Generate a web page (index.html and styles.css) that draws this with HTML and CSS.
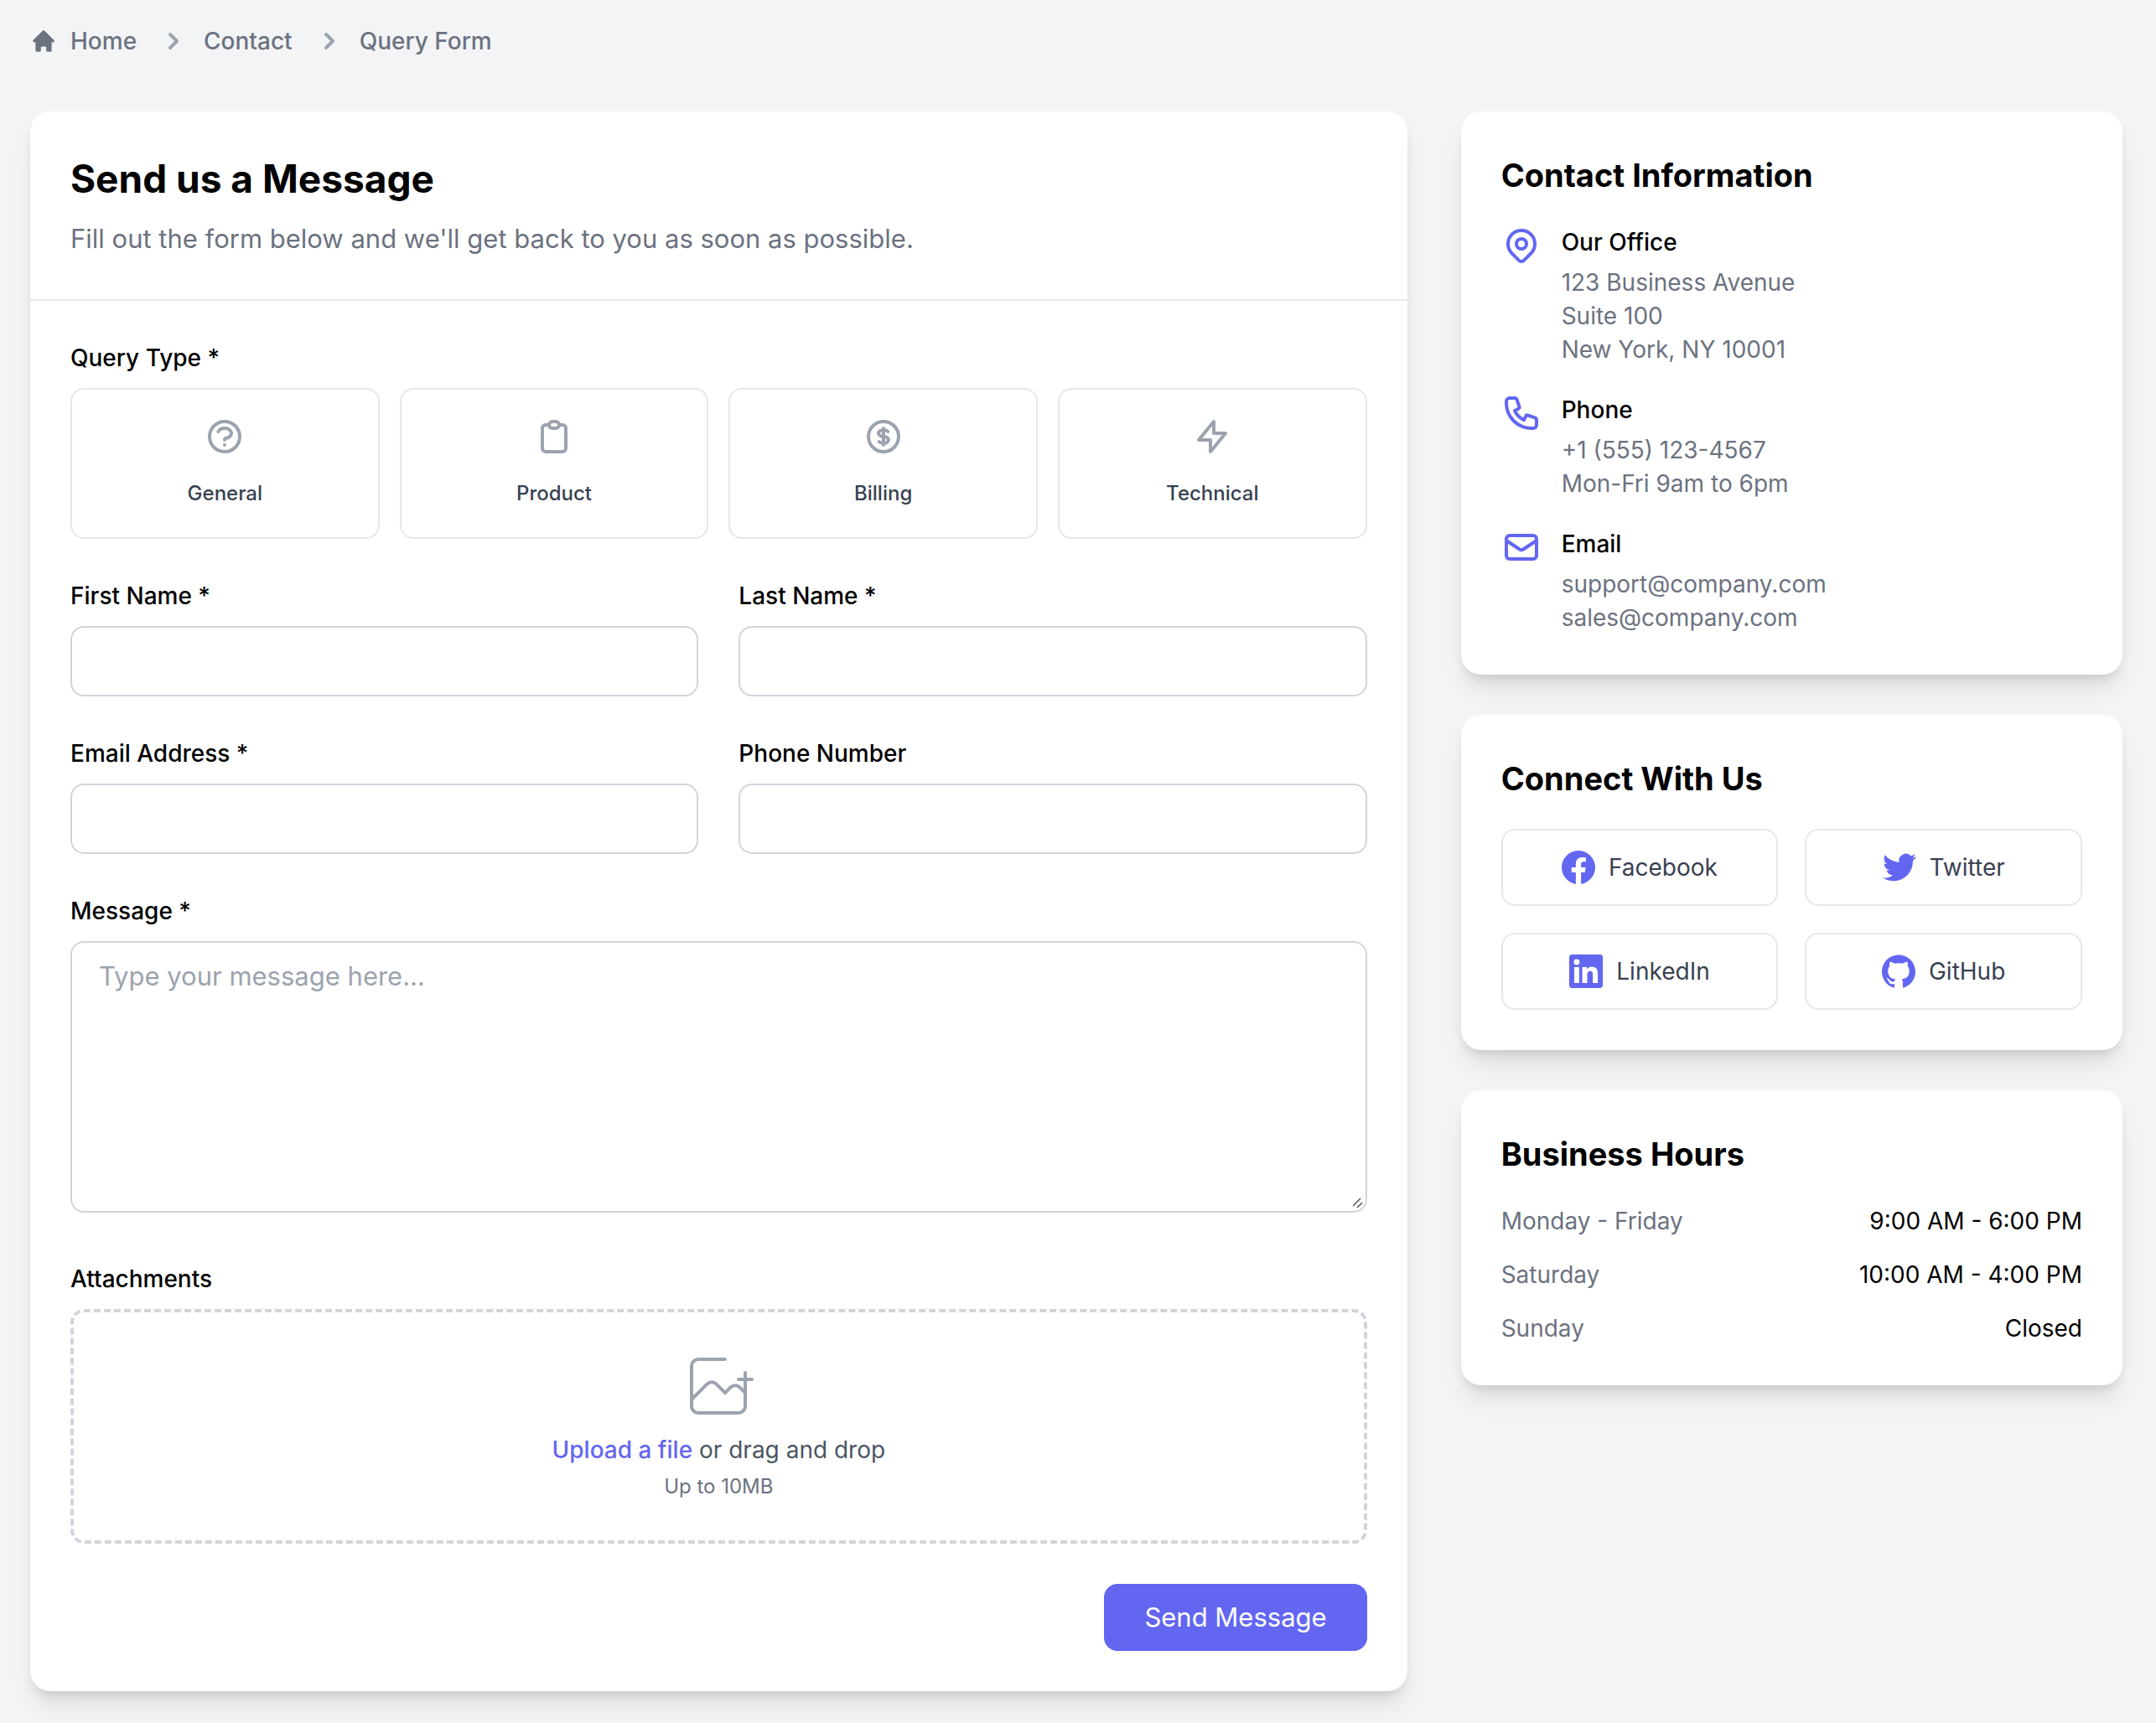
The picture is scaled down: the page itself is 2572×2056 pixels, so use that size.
FILE: index.html
```html
<!DOCTYPE html>
<html lang="en">
<head>
    <meta charset="UTF-8">
    <meta name="viewport" content="width=device-width, initial-scale=1.0">
    <title>Query Form</title>
    <link rel="stylesheet" href="styles.css">
</head>
<body>

<nav class="breadcrumb" aria-label="Breadcrumb">
    <a href="#" class="crumb">
        <svg class="home-icon" viewBox="0 0 20 20" fill="currentColor"><path d="M10.707 2.293a1 1 0 00-1.414 0l-7 7a1 1 0 001.414 1.414L4 10.414V17a1 1 0 001 1h2a1 1 0 001-1v-2a1 1 0 011-1h2a1 1 0 011 1v2a1 1 0 001 1h2a1 1 0 001-1v-6.586l.293.293a1 1 0 001.414-1.414l-7-7z"/></svg>
        Home
    </a>
    <a href="#" class="crumb">
        <svg class="chevron" viewBox="0 0 20 20" fill="currentColor"><path fill-rule="evenodd" d="M7.293 14.707a1 1 0 010-1.414L10.586 10 7.293 6.707a1 1 0 011.414-1.414l4 4a1 1 0 010 1.414l-4 4a1 1 0 01-1.414 0z" clip-rule="evenodd"/></svg>
        Contact
    </a>
    <span class="crumb">
        <svg class="chevron" viewBox="0 0 20 20" fill="currentColor"><path fill-rule="evenodd" d="M7.293 14.707a1 1 0 010-1.414L10.586 10 7.293 6.707a1 1 0 011.414-1.414l4 4a1 1 0 010 1.414l-4 4a1 1 0 01-1.414 0z" clip-rule="evenodd"/></svg>
        Query Form
    </span>
</nav>

<div class="layout">

    <!-- Message form -->
    <main class="card form-card">
        <div class="form-header">
            <h1>Send us a Message</h1>
            <p>Fill out the form below and we'll get back to you as soon as possible.</p>
        </div>

        <form class="query-form">
            <fieldset class="query-types">
                <legend class="label">Query Type *</legend>
                <div class="type-grid">
                    <label class="type-option">
                        <input type="radio" name="queryType" value="general">
                        <svg class="line-icon" viewBox="0 0 24 24"><path d="M8.228 9c.549-1.165 2.03-2 3.772-2 2.21 0 4 1.343 4 3 0 1.4-1.278 2.575-3.006 2.907-.542.104-.994.54-.994 1.093m0 3h.01M21 12a9 9 0 11-18 0 9 9 0 0118 0z"/></svg>
                        <span>General</span>
                    </label>
                    <label class="type-option">
                        <input type="radio" name="queryType" value="product">
                        <svg class="line-icon" viewBox="0 0 24 24"><path d="M9 5H7a2 2 0 00-2 2v12a2 2 0 002 2h10a2 2 0 002-2V7a2 2 0 00-2-2h-2M9 5a2 2 0 002 2h2a2 2 0 002-2M9 5a2 2 0 012-2h2a2 2 0 012 2"/></svg>
                        <span>Product</span>
                    </label>
                    <label class="type-option">
                        <input type="radio" name="queryType" value="billing">
                        <svg class="line-icon" viewBox="0 0 24 24"><path d="M12 8c-1.657 0-3 .895-3 2s1.343 2 3 2 3 .895 3 2-1.343 2-3 2m0-8c1.11 0 2.08.402 2.599 1M12 8V7m0 1v8m0 0v1m0-1c-1.11 0-2.08-.402-2.599-1M21 12a9 9 0 11-18 0 9 9 0 0118 0z"/></svg>
                        <span>Billing</span>
                    </label>
                    <label class="type-option">
                        <input type="radio" name="queryType" value="technical">
                        <svg class="line-icon" viewBox="0 0 24 24"><path d="M13 10V3L4 14h7v7l9-11h-7z"/></svg>
                        <span>Technical</span>
                    </label>
                </div>
            </fieldset>

            <div class="field-row">
                <div class="field">
                    <label class="label" for="firstName">First Name *</label>
                    <input type="text" id="firstName" name="firstName" required>
                </div>
                <div class="field">
                    <label class="label" for="lastName">Last Name *</label>
                    <input type="text" id="lastName" name="lastName" required>
                </div>
            </div>

            <div class="field-row">
                <div class="field">
                    <label class="label" for="email">Email Address *</label>
                    <input type="email" id="email" name="email" required>
                </div>
                <div class="field">
                    <label class="label" for="phone">Phone Number</label>
                    <input type="tel" id="phone" name="phone">
                </div>
            </div>

            <div class="field">
                <label class="label" for="message">Message *</label>
                <textarea id="message" name="message" rows="6" placeholder="Type your message here..." required></textarea>
            </div>

            <div class="field">
                <label class="label" for="attachment">Attachments</label>
                <div class="dropzone">
                    <svg class="upload-icon" viewBox="0 0 48 48"><path d="M28 8H12a4 4 0 00-4 4v24a4 4 0 004 4h24a4 4 0 004-4V16M36 20h8M8 32l9.172-9.172a4 4 0 015.656 0L28 28l3.172-3.172a4 4 0 015.656 0L40 28"/></svg>
                    <p class="upload-text"><label class="upload-link" for="attachment">Upload a file</label> or drag and drop</p>
                    <input type="file" id="attachment" name="attachment" hidden>
                    <p class="upload-hint">Up to 10MB</p>
                </div>
            </div>

            <div class="actions">
                <button type="submit" class="submit-button">Send Message</button>
            </div>
        </form>
    </main>

    <aside class="sidebar">

        <section class="card side-card">
            <h2>Contact Information</h2>
            <div class="contact-list">
                <div class="contact-item">
                    <svg class="line-icon" viewBox="0 0 24 24"><path d="M17.657 16.657L13.414 20.9a1.998 1.998 0 01-2.827 0l-4.244-4.243a8 8 0 1111.314 0z"/><path d="M15 11a3 3 0 11-6 0 3 3 0 016 0z"/></svg>
                    <div>
                        <h3>Our Office</h3>
                        <p>123 Business Avenue<br>Suite 100<br>New York, NY 10001</p>
                    </div>
                </div>
                <div class="contact-item">
                    <svg class="line-icon" viewBox="0 0 24 24"><path d="M3 5a2 2 0 012-2h3.28a1 1 0 01.948.684l1.498 4.493a1 1 0 01-.502 1.21l-2.257 1.13a11.042 11.042 0 005.516 5.516l1.13-2.257a1 1 0 011.21-.502l4.493 1.498a1 1 0 01.684.949V19a2 2 0 01-2 2h-1C9.716 21 3 14.284 3 6V5z"/></svg>
                    <div>
                        <h3>Phone</h3>
                        <p>+1 (555) 123-4567<br>Mon-Fri 9am to 6pm</p>
                    </div>
                </div>
                <div class="contact-item">
                    <svg class="line-icon" viewBox="0 0 24 24"><path d="M3 8l7.89 5.26a2 2 0 002.22 0L21 8M5 19h14a2 2 0 002-2V7a2 2 0 00-2-2H5a2 2 0 00-2 2v10a2 2 0 002 2z"/></svg>
                    <div>
                        <h3>Email</h3>
                        <p>support@company.com<br>sales@company.com</p>
                    </div>
                </div>
            </div>
        </section>

        <section class="card side-card">
            <h2>Connect With Us</h2>
            <div class="social-grid">
                <a href="#" class="social-link">
                    <svg viewBox="0 0 24 24"><path d="M24 12.073c0-6.627-5.373-12-12-12s-12 5.373-12 12c0 5.99 4.388 10.954 10.125 11.854v-8.385H7.078v-3.47h3.047V9.43c0-3.007 1.792-4.669 4.533-4.669 1.312 0 2.686.235 2.686.235v2.953H15.83c-1.491 0-1.956.925-1.956 1.874v2.25h3.328l-.532 3.47h-2.796v8.385C19.612 23.027 24 18.062 24 12.073z"/></svg>
                    Facebook
                </a>
                <a href="#" class="social-link">
                    <svg viewBox="0 0 24 24"><path d="M23.953 4.57a10 10 0 01-2.825.775 4.958 4.958 0 002.163-2.723c-.951.555-2.005.959-3.127 1.184a4.92 4.92 0 00-8.384 4.482C7.69 8.095 4.067 6.13 1.64 3.162a4.822 4.822 0 00-.666 2.475c0 1.71.87 3.213 2.188 4.096a4.904 4.904 0 01-2.228-.616v.06a4.923 4.923 0 003.946 4.827 4.996 4.996 0 01-2.212.085 4.936 4.936 0 004.604 3.417 9.867 9.867 0 01-6.102 2.105c-.39 0-.779-.023-1.17-.067a13.995 13.995 0 007.557 2.209c9.053 0 13.998-7.496 13.998-13.985 0-.21 0-.42-.015-.63A9.935 9.935 0 0024 4.59z"/></svg>
                    Twitter
                </a>
                <a href="#" class="social-link">
                    <svg viewBox="0 0 24 24"><path d="M20.447 20.452h-3.554v-5.569c0-1.328-.027-3.037-1.852-3.037-1.853 0-2.136 1.445-2.136 2.939v5.667H9.351V9h3.414v1.561h.046c.477-.9 1.637-1.85 3.37-1.85 3.601 0 4.267 2.37 4.267 5.455v6.286zM5.337 7.433a2.062 2.062 0 01-2.063-2.065 2.064 2.064 0 112.063 2.065zm1.782 13.019H3.555V9h3.564v11.452zM22.225 0H1.771C.792 0 0 .774 0 1.729v20.542C0 23.227.792 24 1.771 24h20.451C23.2 24 24 23.227 24 22.271V1.729C24 .774 23.2 0 22.222 0h.003z"/></svg>
                    LinkedIn
                </a>
                <a href="#" class="social-link">
                    <svg viewBox="0 0 24 24"><path d="M12 .297c-6.63 0-12 5.373-12 12 0 5.303 3.438 9.8 8.205 11.385.6.113.82-.258.82-.577 0-.285-.01-1.04-.015-2.04-3.338.724-4.042-1.61-4.042-1.61C4.422 18.07 3.633 17.7 3.633 17.7c-1.087-.744.084-.729.084-.729 1.205.084 1.838 1.236 1.838 1.236 1.07 1.835 2.809 1.305 3.495.998.108-.776.417-1.305.76-1.605-2.665-.3-5.466-1.332-5.466-5.93 0-1.31.465-2.38 1.235-3.22-.135-.303-.54-1.523.105-3.176 0 0 1.005-.322 3.3 1.23.96-.267 1.98-.399 3-.405 1.02.006 2.04.138 3 .405 2.28-1.552 3.285-1.23 3.285-1.23.645 1.653.24 2.873.12 3.176.765.84 1.23 1.91 1.23 3.22 0 4.61-2.805 5.625-5.475 5.92.42.36.81 1.096.81 2.22 0 1.606-.015 2.896-.015 3.286 0 .315.21.69.825.57C20.565 22.092 24 17.592 24 12.297c0-6.627-5.373-12-12-12"/></svg>
                    GitHub
                </a>
            </div>
        </section>

        <section class="card side-card">
            <h2>Business Hours</h2>
            <table class="hours">
                <tr>
                    <th scope="row">Monday - Friday</th>
                    <td>9:00 AM - 6:00 PM</td>
                </tr>
                <tr>
                    <th scope="row">Saturday</th>
                    <td>10:00 AM - 4:00 PM</td>
                </tr>
                <tr>
                    <th scope="row">Sunday</th>
                    <td>Closed</td>
                </tr>
            </table>
        </section>

    </aside>
</div>

</body>
</html>
```
FILE: styles.css
```css
* {
    box-sizing: border-box;
    margin: 0;
    padding: 0;
}

body {
    font-family: Inter, "Liberation Sans", sans-serif;
    font-size: 31px;
    line-height: 48px;
    color: #000;
    background-color: #f3f4f6;
    padding: 29px 40px 36px 36px;
}

a {
    color: inherit;
    text-decoration: none;
}

svg {
    display: block;
    flex-shrink: 0;
}

/* Breadcrumb */
.breadcrumb {
    display: flex;
    align-items: center;
    gap: 24px;
    margin-bottom: 64px;
    font-size: 28px;
    line-height: 40px;
    font-weight: 500;
    color: #6b7280;
}

.crumb {
    display: flex;
    align-items: center;
    gap: 16px;
}

.home-icon {
    width: 32px;
    height: 32px;
}

.chevron {
    width: 40px;
    height: 40px;
    color: #9ca3af;
}

/* Page layout */
.layout {
    display: grid;
    grid-template-columns: repeat(3, 1fr);
    gap: 64px;
    align-items: start;
}

.card {
    background-color: #fff;
    border-radius: 24px;
    box-shadow: 0 20px 30px -6px rgba(0, 0, 0, 0.1), 0 8px 12px -4px rgba(0, 0, 0, 0.1);
}

.form-card {
    grid-column: span 2;
}

.form-header {
    padding: 48px;
    border-bottom: 2px solid #e5e7eb;
}

.form-header h1 {
    font-size: 46px;
    line-height: 64px;
    font-weight: 700;
    margin-bottom: 16px;
}

.form-header p {
    color: #6b7280;
}

/* Form */
.query-form {
    display: flex;
    flex-direction: column;
    gap: 48px;
    padding: 48px;
}

.label {
    display: block;
    margin-bottom: 16px;
    font-size: 28px;
    line-height: 40px;
    font-weight: 500;
}

.query-types {
    border: none;
    min-width: 0;
}

.type-grid {
    display: grid;
    grid-template-columns: repeat(4, 1fr);
    gap: 24px;
}

.type-option {
    position: relative;
    display: flex;
    flex-direction: column;
    align-items: center;
    gap: 28px;
    padding: 32px 32px 36px;
    border: 2px solid #e5e7eb;
    border-radius: 16px;
    font-size: 24px;
    line-height: 32px;
    font-weight: 500;
    color: #374151;
    cursor: pointer;
}

/* the radio covers the whole option */
.type-option input {
    position: absolute;
    inset: 0;
    appearance: none;
    border-radius: 16px;
    cursor: pointer;
}

.type-option:has(input:checked) {
    border-color: #6366f1;
}

.line-icon {
    width: 48px;
    height: 48px;
    fill: none;
    stroke: currentColor;
    stroke-width: 2;
    stroke-linecap: round;
    stroke-linejoin: round;
}

.type-option .line-icon {
    color: #9ca3af;
}

.field-row {
    display: grid;
    grid-template-columns: 1fr 1fr;
    gap: 48px;
}

.field input,
.field textarea {
    display: block;
    width: 100%;
    padding: 16px 32px;
    border: 2px solid #d1d5db;
    border-radius: 16px;
    background-color: #fff;
    font-family: inherit;
    font-size: 31px;
    line-height: 48px;
}

.field input {
    height: 84px;
}

.field input[hidden] {
    display: none;
}

.field textarea {
    margin-bottom: 11px;
    resize: vertical;
}

.field textarea::placeholder {
    color: #9ca3af;
}

.field textarea::-webkit-scrollbar {
    width: 30px;
}

.field textarea::-webkit-resizer {
    background: url("data:image/svg+xml,%3Csvg xmlns='http://www.w3.org/2000/svg' width='30' height='30'%3E%3Cpath d='M13 26L26 13M20 26L26 20' stroke='%23555' stroke-width='1.5'/%3E%3C/svg%3E") no-repeat right bottom;
}

.dropzone {
    display: flex;
    flex-direction: column;
    align-items: center;
    gap: 8px;
    padding: 40px 48px 48px;
    border: 4px dashed #d1d5db;
    border-radius: 16px;
}

.upload-icon {
    width: 96px;
    height: 96px;
    fill: none;
    stroke: #9ca3af;
    stroke-width: 2;
    stroke-linecap: round;
    stroke-linejoin: round;
}

.upload-text {
    font-size: 28px;
    line-height: 40px;
    color: #4b5563;
}

.upload-link {
    font-weight: 500;
    color: #6366f1;
    cursor: pointer;
}

.upload-hint {
    font-size: 24px;
    line-height: 32px;
    color: #6b7280;
}

.actions {
    display: flex;
    justify-content: flex-end;
}

.submit-button {
    padding: 16px 48px;
    border: none;
    border-radius: 16px;
    background-color: #6366f1;
    color: #fff;
    font-family: inherit;
    font-size: 31px;
    line-height: 48px;
    cursor: pointer;
}

.submit-button:hover {
    background-color: #4f46e5;
}

/* Sidebar */
.sidebar {
    display: flex;
    flex-direction: column;
    gap: 48px;
}

.side-card {
    padding: 48px;
    font-size: 28px;
    line-height: 40px;
}

.side-card h2 {
    margin-bottom: 32px;
    font-size: 38px;
    line-height: 56px;
    font-weight: 700;
}

.contact-list {
    display: flex;
    flex-direction: column;
    gap: 32px;
}

.contact-item {
    display: flex;
    align-items: flex-start;
    gap: 24px;
}

.contact-item .line-icon {
    color: #6366f1;
}

.contact-item h3 {
    margin-bottom: 8px;
    font-size: 28px;
    font-weight: 500;
}

.contact-item p {
    color: #6b7280;
}

.social-grid {
    display: grid;
    grid-template-columns: 1fr 1fr;
    gap: 32px;
}

.social-link {
    display: flex;
    align-items: center;
    justify-content: center;
    gap: 16px;
    padding: 24px;
    border: 2px solid #e5e7eb;
    border-radius: 16px;
    color: #374151;
}

.social-link svg {
    width: 40px;
    height: 40px;
    fill: #6366f1;
}

.hours {
    width: 100%;
    border-collapse: collapse;
}

.hours th {
    font-weight: 400;
    text-align: left;
    color: #6b7280;
}

.hours td {
    text-align: right;
}

.hours tr + tr > * {
    padding-top: 24px;
}
```
